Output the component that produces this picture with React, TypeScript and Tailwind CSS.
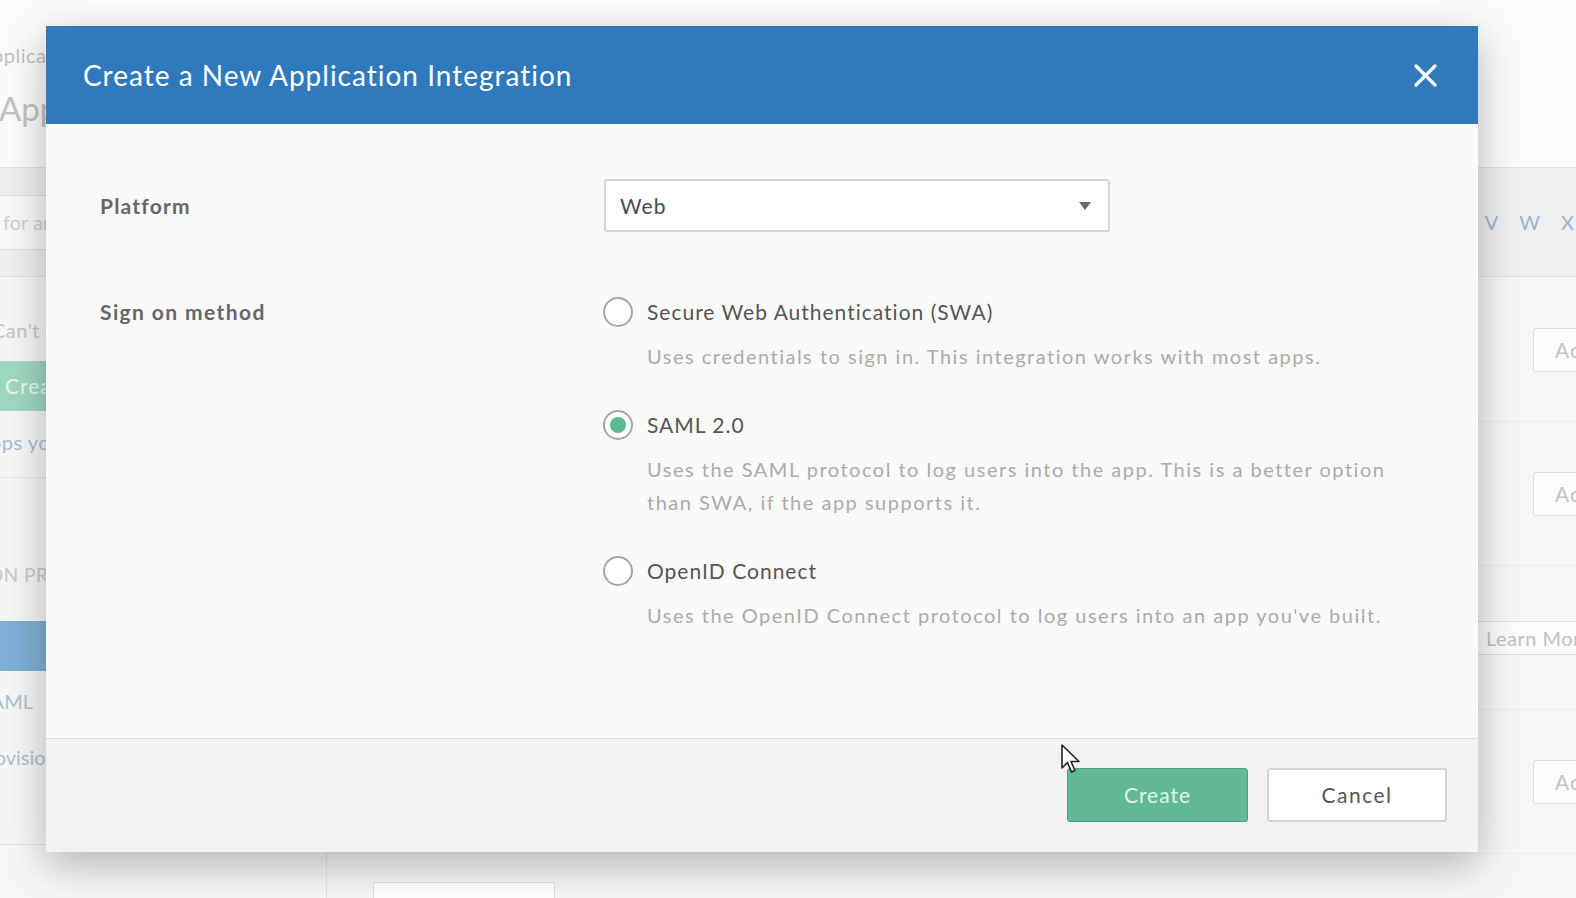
import { useState } from 'react';

type Option = { id: string; label: string; desc: string[] };

const options: Option[] = [
  {
    id: 'swa',
    label: 'Secure Web Authentication (SWA)',
    desc: ['Uses credentials to sign in. This integration works with most apps.'],
  },
  {
    id: 'saml',
    label: 'SAML 2.0',
    desc: [
      'Uses the SAML protocol to log users into the app. This is a better option',
      'than SWA, if the app supports it.',
    ],
  },
  {
    id: 'oidc',
    label: 'OpenID Connect',
    desc: ["Uses the OpenID Connect protocol to log users into an app you've built."],
  },
];

function Radio({ checked }: { checked: boolean }) {
  return (
    <span className="w-[30px] h-[30px] rounded-full border-2 border-[#a6a6a6] bg-white flex items-center justify-center shrink-0">
      {checked && <span className="w-[16px] h-[16px] rounded-full bg-[#5cb893]" />}
    </span>
  );
}

// faded page behind the modal
function BackgroundPage() {
  return (
    <div className="flex flex-col w-[1576px] h-[898px] bg-[#f6f6f6] text-[#c2c2c2] whitespace-nowrap">
      <div className="h-[167px] shrink-0 pt-[42px] bg-[#fbfbfb]">
        <div className="-ml-[22px] text-[20px] leading-[26px] tracking-[0.5px]">Applications</div>
        <div className="-ml-[1px] text-[33px] leading-[44px] mt-[18px]">Applications</div>
      </div>
      <div className="h-[110px] shrink-0 bg-[#efefef] border-y border-[#e2e2e2] flex items-center justify-between">
        <div className="-ml-[72px] w-[300px] h-[55px] bg-[#f8f8f8] border border-[#dedede] flex items-center pl-[10px] text-[20px] text-[#cfcfcf]">
          Search for an app
        </div>
        <div className="flex gap-[21px] text-[20px] text-[#9db4cf] mr-[2px]">
          <span>V</span>
          <span>W</span>
          <span>X</span>
        </div>
      </div>
      <div className="flex flex-1 min-h-0">
        <div className="w-[327px] shrink-0 border-r border-[#e4e4e4] flex flex-col">
          <div className="-ml-[8px] mt-[40px] text-[20px] leading-[26px] text-[#c6c6c6] tracking-[0.5px]">Can't find an app?</div>
          <div className="mt-[18px] h-[50px] shrink-0 w-[220px] -ml-[30px] bg-[#9fd8c1] rounded-[3px] flex items-center pl-[35px] text-[21px] tracking-[1px] text-[#e9f7f1]">
            Create New App
          </div>
          <div className="-ml-[24px] mt-[14px] text-[20px] leading-[34px] text-[#a9bccf] tracking-[0.5px]">Apps you created</div>
          <div className="mt-[18px] border-t border-[#e6e6e6]" />
          <div className="-ml-[12px] mt-[84px] text-[19px] leading-[26px] text-[#c9c9c9] tracking-[0.5px]">ON PREMISE</div>
          <div className="mt-[33px] h-[50px] shrink-0 bg-[#7fb1d7]" />
          <div className="-ml-[20px] mt-[17px] text-[20px] leading-[26px] text-[#b0c0d0]">SAML</div>
          <div className="-ml-[24px] mt-[30px] text-[20px] leading-[26px] text-[#b0c0d0]">Provisioning</div>
          <div className="mt-[74px] border-t border-[#e2e2e2]" />
        </div>
        <div className="flex-1 flex flex-col pt-[2px]">
          <div className="h-[143px] shrink-0 border-b border-[#ececec] flex items-center justify-end">
            <div className="mr-[-52px] w-[95px] h-[44px] bg-[#fcfcfc] border border-[#dcdcdc] rounded-[3px] flex items-center pl-[21px] text-[21px] tracking-[1px]">Add</div>
          </div>
          <div className="h-[144px] shrink-0 border-b border-[#ececec] flex items-center justify-end">
            <div className="mr-[-52px] w-[95px] h-[44px] bg-[#fcfcfc] border border-[#dcdcdc] rounded-[3px] flex items-center pl-[21px] text-[21px] tracking-[1px]">Add</div>
          </div>
          <div className="h-[144px] shrink-0 border-b border-[#ececec] flex items-center justify-end">
            <div className="mr-[-50px] w-[150px] h-[34px] bg-[#fcfcfc] border border-[#dcdcdc] rounded-[3px] flex items-center pl-[9px] text-[20px] tracking-[0.5px]">Learn More</div>
          </div>
          <div className="h-[144px] shrink-0 border-b border-[#ececec] flex items-center justify-end">
            <div className="mr-[-52px] w-[95px] h-[44px] bg-[#fcfcfc] border border-[#dcdcdc] rounded-[3px] flex items-center pl-[21px] text-[21px] tracking-[1px]">Add</div>
          </div>
          <div className="mt-[28px] ml-[46px] w-[182px] h-[20px] shrink-0 border border-[#e0e0e0] bg-white" />
        </div>
      </div>
    </div>
  );
}

export default function App() {
  const [method, setMethod] = useState('saml');

  return (
    <div
      className="relative w-[1576px] h-[898px] overflow-hidden"
      style={{ fontFamily: 'Lato, "Open Sans", sans-serif' }}
    >
      <BackgroundPage />

      <div className="absolute left-[46px] top-[26px] w-[1432px] h-[826px] flex flex-col bg-[#fafafa] shadow-[0_12px_40px_rgba(0,0,0,0.28)]">
        <div className="h-[98px] bg-[#2f7abd] flex items-center justify-between pl-[37px] pr-[41px] shrink-0">
          <h1 className="text-white text-[28px] font-normal tracking-[1px]">Create a New Application Integration</h1>
          <button className="w-[24px] h-[24px] flex items-center justify-center">
            <svg width="23" height="23" viewBox="0 0 23 23" fill="none">
              <path d="M2 2 L21 21 M21 2 L2 21" stroke="white" strokeWidth="3.2" strokeLinecap="round" />
            </svg>
          </button>
        </div>

        <div className="flex-1 pl-[54px] pt-[55px]">
          <div className="flex items-center">
            <div className="w-[504px] text-[21px] font-bold tracking-[1.2px] text-[#666666]">Platform</div>
            <div className="w-[506px] h-[53px] bg-white border-2 border-[#d6d6d6] rounded-[3px] flex items-center justify-between pl-[14px] pr-[17px]">
              <span className="text-[21px] tracking-[1px] text-[#4a4a4a]">Web</span>
              <svg width="12" height="8" viewBox="0 0 12 8">
                <path d="M0 0 H12 L6 8 Z" fill="#6b6b6b" />
              </svg>
            </div>
          </div>

          <div className="flex mt-[65px]">
            <div className="w-[503px] h-[30px] flex items-center text-[21px] font-bold tracking-[1.4px] text-[#666666]">Sign on method</div>
            <div className="flex flex-col gap-[37px]">
              {options.map((o) => (
                <div key={o.id} className="flex flex-col cursor-pointer" onClick={() => setMethod(o.id)}>
                  <div className="flex items-center gap-[14px] h-[30px]">
                    <Radio checked={method === o.id} />
                    <span className="text-[21px] tracking-[1px] text-[#555555]">{o.label}</span>
                  </div>
                  <div className="mt-[13px] pl-[44px] text-[20px] tracking-[1.5px] leading-[33px] text-[#ababab]">
                    {o.desc.map((d) => (
                      <div key={d}>{d}</div>
                    ))}
                  </div>
                </div>
              ))}
            </div>
          </div>
        </div>

        <div className="h-[114px] shrink-0 border-t border-[#dddddd] bg-[#f2f2f2] flex items-start justify-end pt-[29px] pr-[31px] gap-[19px]">
          <button className="w-[181px] h-[54px] bg-[#62b996] border border-[#4f9f7f] rounded-[3px] text-[21px] tracking-[1px] text-[#dcf5ea]">
            Create
          </button>
          <button className="w-[180px] h-[54px] bg-white border-2 border-[#d4d4d4] rounded-[3px] text-[21px] tracking-[1.5px] text-[#555555]">
            Cancel
          </button>
        </div>
      </div>

      {/* mouse pointer */}
      <svg className="absolute left-[1061px] top-[744px]" width="22" height="32" viewBox="0 0 22 32">
        <path
          d="M1 1 L1 24 L6.5 18.5 L10.5 28 L14 26.5 L10 17.5 L18 17.5 Z"
          fill="white"
          stroke="#222"
          strokeWidth="1.6"
          strokeLinejoin="round"
        />
      </svg>
    </div>
  );
}
